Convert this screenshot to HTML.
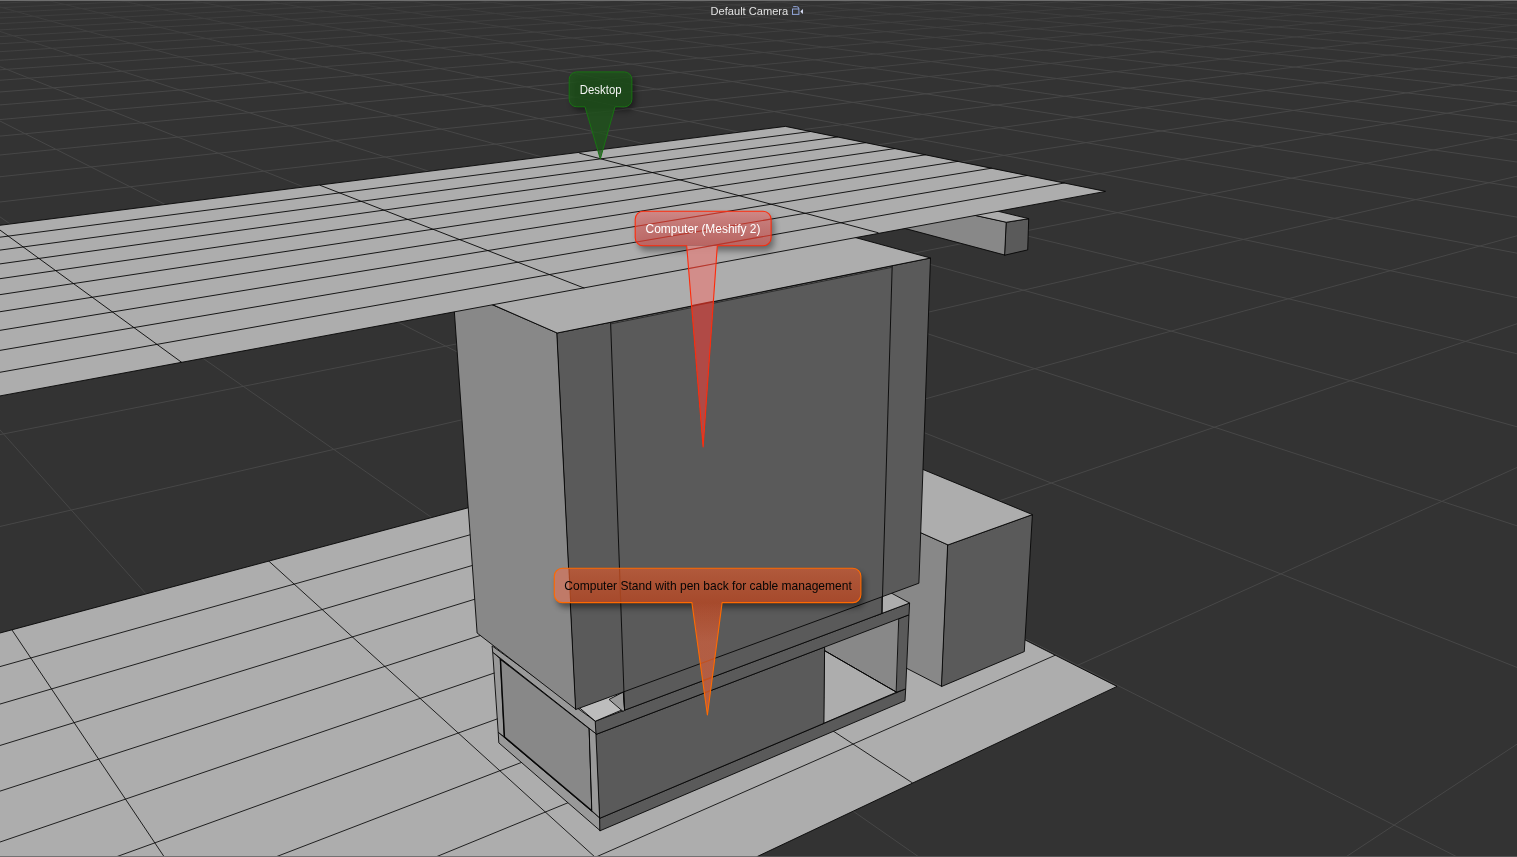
<!DOCTYPE html>
<html><head><meta charset="utf-8"><title>viewport</title>
<style>html,body{margin:0;padding:0;background:#333;overflow:hidden}svg{display:block}text{font-family:"Liberation Sans",sans-serif}</style>
</head><body>
<svg width="1517" height="857" viewBox="0 0 1517 857">
<rect x="0" y="0" width="1517" height="857" fill="#333333"/>
<g stroke="#474747" stroke-width="1" fill="none">
<path d="M1512.1 -30.0L1547.0 -28.2" />
<path d="M1457.6 -30.0L1547.0 -25.4" />
<path d="M1403.0 -30.0L1547.0 -22.3" />
<path d="M1348.3 -30.0L1547.0 -19.1" />
<path d="M1293.7 -30.0L1547.0 -15.7" />
<path d="M1239.0 -30.0L1547.0 -12.0" />
<path d="M1184.4 -30.0L1547.0 -8.2" />
<path d="M1129.7 -30.0L1547.0 -4.0" />
<path d="M1075.0 -30.0L1547.0 0.4" />
<path d="M1020.2 -30.0L1547.0 5.1" />
<path d="M965.5 -30.0L1547.0 10.2" />
<path d="M910.7 -30.0L1547.0 15.7" />
<path d="M855.9 -30.0L1547.0 21.7" />
<path d="M801.1 -30.0L1547.0 28.1" />
<path d="M746.3 -30.0L1547.0 35.1" />
<path d="M691.4 -30.0L1547.0 42.8" />
<path d="M636.6 -30.0L1547.0 51.2" />
<path d="M581.7 -30.0L1547.0 60.5" />
<path d="M526.8 -30.0L1547.0 70.7" />
<path d="M471.8 -30.0L1547.0 82.2" />
<path d="M416.9 -30.0L1547.0 94.9" />
<path d="M361.9 -30.0L1547.0 109.4" />
<path d="M306.9 -30.0L1547.0 125.8" />
<path d="M251.9 -30.0L1547.0 144.6" />
<path d="M196.9 -30.0L1547.0 166.4" />
<path d="M141.9 -30.0L1547.0 191.9" />
<path d="M86.8 -30.0L1547.0 222.3" />
<path d="M31.7 -30.0L1547.0 258.9" />
<path d="M-23.4 -30.0L1547.0 304.0" />
<path d="M-30.0 -18.3L1547.0 361.0" />
<path d="M-30.0 -1.3L1547.0 435.1" />
<path d="M-30.0 21.7L1547.0 535.6" />
<path d="M-30.0 54.8L1547.0 679.3" />
<path d="M-30.0 105.9L1516.7 887.0" />
<path d="M-30.0 196.0L962.0 887.0" />
<path d="M-30.0 396.3L407.0 887.0" />
<path d="M-8.2 -30.0L-30.0 -29.2" />
<path d="M63.4 -30.0L-30.0 -26.6" />
<path d="M135.1 -30.0L-30.0 -23.9" />
<path d="M206.7 -30.0L-30.0 -21.0" />
<path d="M278.3 -30.0L-30.0 -18.0" />
<path d="M349.8 -30.0L-30.0 -14.7" />
<path d="M421.3 -30.0L-30.0 -11.3" />
<path d="M492.8 -30.0L-30.0 -7.7" />
<path d="M564.2 -30.0L-30.0 -3.9" />
<path d="M635.6 -30.0L-30.0 0.2" />
<path d="M707.0 -30.0L-30.0 4.6" />
<path d="M778.4 -30.0L-30.0 9.2" />
<path d="M849.7 -30.0L-30.0 14.2" />
<path d="M921.0 -30.0L-30.0 19.6" />
<path d="M992.2 -30.0L-30.0 25.3" />
<path d="M1063.4 -30.0L-30.0 31.6" />
<path d="M1134.6 -30.0L-30.0 38.3" />
<path d="M1205.7 -30.0L-30.0 45.6" />
<path d="M1276.9 -30.0L-30.0 53.6" />
<path d="M1347.9 -30.0L-30.0 62.3" />
<path d="M1419.0 -30.0L-30.0 71.9" />
<path d="M1490.0 -30.0L-30.0 82.5" />
<path d="M1547.0 -28.9L-30.0 94.3" />
<path d="M1547.0 -23.0L-30.0 107.4" />
<path d="M1547.0 -16.3L-30.0 122.2" />
<path d="M1547.0 -8.8L-30.0 138.9" />
<path d="M1547.0 -0.2L-30.0 158.0" />
<path d="M1547.0 9.8L-30.0 180.0" />
<path d="M1547.0 21.3L-30.0 205.5" />
<path d="M1547.0 34.9L-30.0 235.7" />
<path d="M1547.0 51.2L-30.0 271.8" />
<path d="M1547.0 71.1L-30.0 315.8" />
<path d="M1547.0 95.8L-30.0 370.6" />
<path d="M1547.0 127.4L-30.0 440.6" />
<path d="M1547.0 169.3L-30.0 533.4" />
<path d="M1547.0 227.5L-30.0 662.2" />
<path d="M1547.0 313.5L-30.0 852.8" />
<path d="M1547.0 454.0L585.3 887.0" />
<path d="M1547.0 724.4L1300.2 887.0" />
</g>
<linearGradient id="gfade" x1="0" y1="0" x2="0" y2="1"><stop offset="0" stop-color="#333" stop-opacity="0.55"/><stop offset="1" stop-color="#333" stop-opacity="0"/></linearGradient><rect x="0" y="0" width="1517" height="90" fill="url(#gfade)"/>
<g stroke="#060606" stroke-width="0.9" stroke-linejoin="round" stroke-linecap="round">
<polygon points="-40.0,643.7 661.4,456.1 1117.0,686.4 692.8,887.0 -40.0,887.0" fill="#adadad" />
<clipPath id="matclip"><polygon points="-40.0,643.7 661.4,456.1 1117.0,686.4 692.8,887.0 -40.0,887.0"/></clipPath><g stroke="#060606" stroke-width="0.85" fill="none" clip-path="url(#matclip)"><path d="M12.0 630.0L164.3 857.0"/><path d="M267.6 560.0L594.9 857.0"/><path d="M756.6 680.9L912.4 782.9"/><path d="M-40.0 677.8L693.3 472.2"/><path d="M-40.0 715.8L728.8 490.2"/><path d="M-40.0 757.8L766.6 509.3"/><path d="M-40.0 804.1L806.9 529.6"/><path d="M-40.0 855.7L849.9 551.4"/><path d="M-40.0 913.4L895.8 574.6"/><path d="M-40.0 978.3L945.2 599.5"/><path d="M-40.0 1052.1L998.2 626.3"/><path d="M-40.0 1136.4L1055.3 655.2"/></g>
<polygon points="900.0,198.9 1006.6,222.2 1005.0,255.1 880.0,221.8" fill="#888888" />
<polygon points="1006.6,222.2 1028.7,218.7 1027.7,249.9 1005.0,255.1" fill="#5a5a5a" />
<polygon points="950.0,209.8 980.0,206.9 1028.7,218.7 1006.6,222.2" fill="#adadad" />
<polygon points="880.0,514.5 948.0,544.9 941.8,686.4 880.0,654.6" fill="#888888" />
<polygon points="948.0,544.9 1032.4,514.6 1024.3,651.6 941.8,686.4" fill="#5a5a5a" />
<polygon points="900.0,459.5 923.0,469.5 1032.4,514.6 948.0,544.9 900.0,523.5" fill="#adadad" />
<polygon points="824.6,640.0 905.0,612.0 903.0,690.0 896.5,692.2 824.6,650.7" fill="#888888" />
<polygon points="824.6,650.7 896.5,692.2 823.9,723.2" fill="#adadad" />
<path d="M824.6 650.7L896.5 692.2" />
<polygon points="498.5,732.5 600.0,818.2 600.2,830.7 499.1,743.1" fill="#999999" />
<polygon points="600.0,818.2 905.7,688.9 905.0,700.8 600.2,830.7" fill="#5a5a5a" />
<polygon points="493.0,652.4 500.4,659.0 504.4,737.0 498.5,732.5" fill="#999999" />
<polygon points="500.4,659.0 589.4,728.3 592.1,811.0 504.4,737.0" fill="#888888" stroke="#060606" stroke-width="1.5" stroke-linejoin="round" />
<polygon points="589.4,728.3 596.7,734.3 600.0,818.2 592.1,811.0" fill="#999999" />
<polygon points="899.1,618.6 909.0,614.8 905.7,688.9 896.5,692.2" fill="#5a5a5a" />
<polygon points="596.3,734.3 824.6,647.0 823.9,723.3 600.0,818.2" fill="#5a5a5a" />
<polygon points="492.4,646.1 596.0,721.7 596.7,734.3 493.0,652.4" fill="#999999" />
<polygon points="595.6,721.1 909.6,603.0 909.0,614.8 596.3,734.3" fill="#5a5a5a" />
<polygon points="575.0,703.5 609.4,690.0 630.0,706.5 595.6,721.1" fill="#bdbdbd" />
<polygon points="875.0,590.0 880.0,586.9 909.6,603.0 875.0,616.0" fill="#adadad" />
<polygon points="440.0,282.0 557.2,333.0 576.0,709.4 477.1,633.0 454.4,312.2" fill="#888888" />
<polygon points="609.4,699.3 623.3,692.0 624.6,710.2 623.3,711.2" fill="#9a9a9a" />
<polygon points="557.2,333.0 930.5,258.0 918.9,583.2 882.0,596.8 882.0,613.4 624.6,710.2 623.3,692.0 576.0,709.4" fill="#5a5a5a" />
<path d="M610.6 322.3L624.6 710.2" />
<path d="M892.2 265.7L882.0 613.4" />
<path d="M623.3 692.0L882.0 596.8" />
<path d="M610.8 323.9L892.1 267.3" stroke="#2a2a2a" />
<polygon points="473.5,296.3 557.2,333.0 930.5,258.0 833.1,231.5" fill="#adadad" />
<polygon points="-40.0,230.3 785.4,126.4 1105.5,191.4 -40.0,403.3" fill="#adadad" />
<path d="M-40.0 242.4L810.6 131.5" />
<path d="M-40.0 255.5L837.4 137.0" />
<path d="M-40.0 269.5L865.5 142.7" />
<path d="M-40.0 284.5L894.8 148.6" />
<path d="M-40.0 300.7L925.5 154.8" />
<path d="M-40.0 318.0L957.7 161.4" />
<path d="M-40.0 336.9L991.5 168.2" />
<path d="M-40.0 357.2L1027.0 175.5" />
<path d="M-40.0 379.4L1064.3 183.0" />
<path d="M-5.6 226.0L181.6 362.3" />
<path d="M320.1 185.3L584.0 288.0" />
<path d="M579.6 153.2L878.1 232.7" />
</g>
<defs><filter id="sh" x="-20%" y="-30%" width="140%" height="180%"><feGaussianBlur stdDeviation="3.2"/></filter><linearGradient id="gred" x1="0" y1="0" x2="0" y2="1"><stop offset="0" stop-color="#d28583"/><stop offset="1" stop-color="#bf6562"/></linearGradient><clipPath id="cfront"><polygon points="557.2,333.0 930.5,258.0 918.9,583.2 882.0,596.8 882.0,613.4 624.6,710.2 623.3,692.0 576.0,709.4"/></clipPath><clipPath id="cleft"><polygon points="440.0,282.0 557.2,333.0 576.0,709.4 477.1,633.0 454.4,312.2"/></clipPath></defs>
<path d="M580.2 75.9H626.9A8 8 0 0 1 634.9 83.9V102.8A8 8 0 0 1 626.9 110.8H580.2A8 8 0 0 1 572.2 102.8V83.9A8 8 0 0 1 580.2 75.9Z" fill="#000" opacity="0.45" filter="url(#sh)"/>
<path d="M576.7 71.9H624.4A7.5 7.5 0 0 1 631.9 79.4V99.3A7.5 7.5 0 0 1 624.4 106.8H615.0L600.3 159.0L585.0 106.8H576.7A7.5 7.5 0 0 1 569.2 99.3V79.4A7.5 7.5 0 0 1 576.7 71.9Z" fill="rgba(30,84,26,0.78)" stroke="#187312" stroke-width="1" stroke-linejoin="round"/>
<text opacity="0.999" x="600.7" y="94.0" font-size="12.6" fill="#f4f4f4" text-anchor="middle" textLength="41.8" lengthAdjust="spacingAndGlyphs">Desktop</text>
<clipPath id="cred"><path d="M643.2 211.2H763.1A8 8 0 0 1 771.1 219.2V237.8A8 8 0 0 1 763.1 245.8H717.3L703.1 447.0L686.7 245.8H643.2A8 8 0 0 1 635.2 237.8V219.2A8 8 0 0 1 643.2 211.2Z"/></clipPath>
<path d="M646.2 216.2H766.1A8 8 0 0 1 774.1 224.2V242.8A8 8 0 0 1 766.1 250.8H646.2A8 8 0 0 1 638.2 242.8V224.2A8 8 0 0 1 646.2 216.2Z" fill="#000" opacity="0.4" filter="url(#sh)"/>
<path d="M686.7 245.8H717.3L703.1 447.0Z" fill="#d58b88" fill-opacity="0.93"/>
<path d="M686.7 245.8H717.3L703.1 447.0Z" fill="#b04a46" clip-path="url(#cfront)"/>
<path d="M643.2 211.2H763.1A8 8 0 0 1 771.1 219.2V237.8A8 8 0 0 1 763.1 245.8H643.2A8 8 0 0 1 635.2 237.8V219.2A8 8 0 0 1 643.2 211.2Z" fill="url(#gred)" fill-opacity="0.93"/>
<g clip-path="url(#cred)" stroke="#b8352a" stroke-width="1.1" fill="none">
<path d="M-40.0 242.4L810.6 131.5" />
<path d="M-40.0 255.5L837.4 137.0" />
<path d="M-40.0 269.5L865.5 142.7" />
<path d="M-40.0 284.5L894.8 148.6" />
<path d="M-40.0 300.7L925.5 154.8" />
<path d="M-40.0 318.0L957.7 161.4" />
<path d="M-40.0 336.9L991.5 168.2" />
<path d="M-40.0 357.2L1027.0 175.5" />
<path d="M-40.0 379.4L1064.3 183.0" />
<path d="M-5.6 226.0L181.6 362.3" />
<path d="M320.1 185.3L584.0 288.0" />
<path d="M579.6 153.2L878.1 232.7" />
<path d="M-40.0 403.3L1105.5 191.4" />
<path d="M557.2 333.0L930.5 258.0" stroke="#a52a20" stroke-width="1.6" />
</g>
<path d="M643.2 211.2H763.1A8 8 0 0 1 771.1 219.2V237.8A8 8 0 0 1 763.1 245.8H717.3L703.1 447.0L686.7 245.8H643.2A8 8 0 0 1 635.2 237.8V219.2A8 8 0 0 1 643.2 211.2Z" fill="none" stroke="#ff2a0a" stroke-width="1.1" stroke-linejoin="round"/>
<text opacity="0.999" x="645.6" y="232.7" font-size="12.6" fill="#ffffff" textLength="114.9" lengthAdjust="spacingAndGlyphs">Computer (Meshify 2)</text>
<clipPath id="cora"><path d="M562.3 568.2H852.9A8 8 0 0 1 860.9 576.2V594.6A8 8 0 0 1 852.9 602.6H722.1L707.4 715.0L691.9 602.6H562.3A8 8 0 0 1 554.3 594.6V576.2A8 8 0 0 1 562.3 568.2Z"/></clipPath>
<path d="M565.3 573.2H855.9A8 8 0 0 1 863.9 581.2V599.6A8 8 0 0 1 855.9 607.6H565.3A8 8 0 0 1 557.3 599.6V581.2A8 8 0 0 1 565.3 573.2Z" fill="#000" opacity="0.45" filter="url(#sh)"/>
<linearGradient id="gob" gradientUnits="userSpaceOnUse" x1="0" y1="568.2" x2="0" y2="602.6"><stop offset="0" stop-color="#b55a3b"/><stop offset="1" stop-color="#ab4b2c"/></linearGradient>
<path d="M562.3 568.2H852.9A8 8 0 0 1 860.9 576.2V594.6A8 8 0 0 1 852.9 602.6H722.1L707.4 715.0L691.9 602.6H562.3A8 8 0 0 1 554.3 594.6V576.2A8 8 0 0 1 562.3 568.2Z" fill="url(#gob)" fill-opacity="0.96"/>
<path d="M562.3 568.2H852.9A8 8 0 0 1 860.9 576.2V594.6A8 8 0 0 1 852.9 602.6H562.3A8 8 0 0 1 554.3 594.6V576.2A8 8 0 0 1 562.3 568.2Z" fill="#c07a68" clip-path="url(#cleft)"/>
<linearGradient id="gora" gradientUnits="userSpaceOnUse" x1="0" y1="602.6" x2="0" y2="642.6"><stop offset="0" stop-color="#b96a52" stop-opacity="0"/><stop offset="1" stop-color="#b96a52" stop-opacity="0.6"/></linearGradient>
<path d="M691.9 602.6H722.1L707.4 715.0Z" fill="url(#gora)"/>
<g clip-path="url(#cora)" stroke="#a4441f" stroke-width="1.1" fill="none">
<path d="M610.6 322.3L624.6 710.2" />
<path d="M557.2 333.0L576.0 709.4" />
<path d="M623.3 692.0L882.0 596.8" stroke="#c2521f" />
<path d="M595.6 721.1L909.6 603.0" stroke="#c2521f" stroke-width="1.6" />
<path d="M596.3 734.3L909.0 614.8" stroke="#c2521f" />
</g>
<path d="M562.3 568.2H852.9A8 8 0 0 1 860.9 576.2V594.6A8 8 0 0 1 852.9 602.6H722.1L707.4 715.0L691.9 602.6H562.3A8 8 0 0 1 554.3 594.6V576.2A8 8 0 0 1 562.3 568.2Z" fill="none" stroke="#ff6a00" stroke-width="1.1" stroke-linejoin="round"/>
<text opacity="0.999" x="564.3" y="589.6" font-size="12.6" fill="#050505" textLength="287.5" lengthAdjust="spacingAndGlyphs">Computer Stand with pen back for cable management</text>
<rect x="0" y="0" width="1517" height="1" fill="#6e6e6e"/>
<rect x="0" y="856" width="1517" height="1" fill="#555555"/>
<rect x="0" y="856" width="1517" height="1" fill="#727272" clip-path="url(#matclip)"/>
<text opacity="0.999" x="710.6" y="14.9" font-size="11.4" fill="#e2e2e2" textLength="77.6" lengthAdjust="spacingAndGlyphs">Default Camera</text>
<g fill="none" stroke="#8fa3d6" stroke-width="1"><rect x="792.5" y="9.0" width="6.4" height="5.4"/><path d="M793.2 6.6H796.6Q798.9 6.6 798.9 9.0"/></g>
<path d="M800.4 11.5L802.9 9.0V14.0Z" fill="#dfe6ff"/>
</svg>
</body></html>
